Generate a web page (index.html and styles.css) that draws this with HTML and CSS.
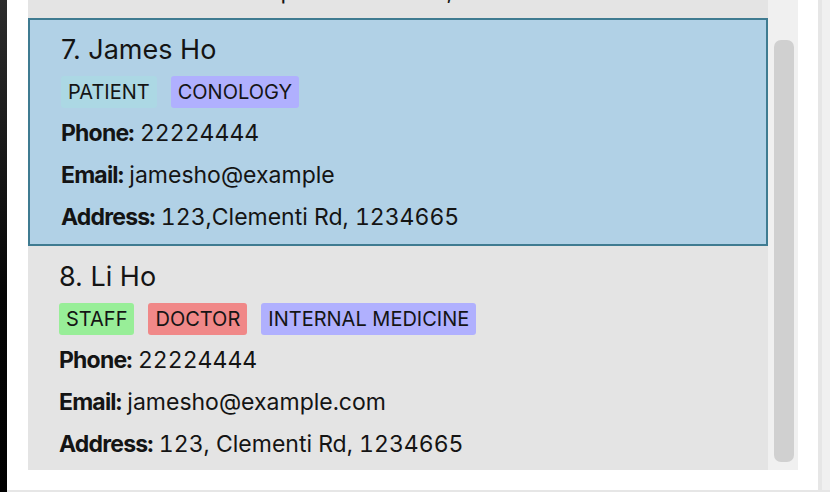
FILE: index.html
```html
<!DOCTYPE html>
<html lang="en">
<head>
<meta charset="utf-8">
<title>Person list</title>
<link rel="stylesheet" href="styles.css">
</head>
<body>
<div class="app">
  <div class="edge"></div>
  <div class="main">
    <div class="row">
      <div class="gutter"></div>
      <div class="listwrap">
        <div class="list">
          <div class="card card-partial">
            <div class="partial-inner">
              <div class="detail"><b>Address:</b> Blk 47 Tampines Street 20, #17-35</div>
            </div>
          </div>
          <div class="card selected">
            <div class="name">7. James Ho</div>
            <div class="tags">
              <span class="tag t-patient">PATIENT</span>
              <span class="tag t-dept">CONOLOGY</span>
            </div>
            <div class="detail"><b>Phone:</b> 22224444</div>
            <div class="detail"><b>Email:</b> jamesho@example</div>
            <div class="detail"><b>Address:</b> 123,Clementi Rd, 1234665</div>
          </div>
          <div class="card">
            <div class="name">8. Li Ho</div>
            <div class="tags">
              <span class="tag t-staff">STAFF</span>
              <span class="tag t-doctor">DOCTOR</span>
              <span class="tag t-dept">INTERNAL MEDICINE</span>
            </div>
            <div class="detail"><b>Phone:</b> 22224444</div>
            <div class="detail"><b>Email:</b> jamesho@example.com</div>
            <div class="detail"><b>Address:</b> 123, Clementi Rd, 1234665</div>
          </div>
        </div>
        <div class="scrolltrack"><div class="thumb"></div></div>
      </div>
      <div class="rightpad"></div>
      <div class="divider"></div>
      <div class="farright"></div>
    </div>
    <div class="bottomline"></div>
  </div>
</div>
</body>
</html>
```
FILE: styles.css
```css
* { box-sizing: border-box; }
html, body { margin: 0; padding: 0; }
body {
  width: 830px;
  height: 492px;
  overflow: hidden;
  background: #ffffff;
  font-family: "Inter", "Noto Sans", sans-serif;
  color: #141414;
}
.app { display: flex; height: 492px; }
.edge {
  width: 7px;
  flex: none;
  background: linear-gradient(to bottom, #2c2c2c, #050505 60%, #000);
}
.main { flex: 1; display: flex; flex-direction: column; }
.row { display: flex; height: 490px; }
.gutter { width: 21px; flex: none; }
.listwrap { display: flex; height: 470px; flex: none; }
.list {
  width: 740px;
  height: 470px;
  overflow: hidden;
  background: #e4e4e4;
  display: flex;
  flex-direction: column;
}
.scrolltrack {
  width: 30px;
  background: #f0f0f0;
  padding: 40px 4px 8px 6px;
  display: flex;
}
.thumb {
  flex: 1;
  background: #d0d0d0;
  border-radius: 7px;
}
.rightpad { width: 20px; flex: none; }
.divider { width: 4px; flex: none; background: #e6e6e6; }
.farright { flex: 1; background: #f0f0f0; }
.bottomline { height: 2px; background: #e6e6e6; }

.card {
  flex: none;
  padding: 15px 20px 6px 31px;
  background: #e4e4e4;
}
.card.selected {
  background: #b1d1e6;
  border: 2px solid #3f7b91;
  padding-top: 14px;
}
.card-partial {
  height: 18px;
  padding: 0 20px 0 31px;
  overflow: hidden;
  display: flex;
  flex-direction: column;
  justify-content: flex-end;
}
.partial-inner { padding-bottom: 6px; }
.name {
  font-size: 27px;
  line-height: 32px;
  letter-spacing: 0;
}
.tags {
  display: flex;
  gap: 14px;
  margin-top: 10px;
  margin-bottom: 4px;
}
.tag {
  font-size: 20px;
  line-height: 24px;
  padding: 4px 7px;
  border-radius: 3px;
  color: #151515;
}
.t-patient { background: #acd8e4; }
.t-dept { background: #b0b0fe; }
.t-staff { background: #98ee98; }
.t-doctor { background: #f08888; }
.detail {
  font-size: 23px;
  line-height: 42px;
  letter-spacing: 0;
  white-space: nowrap;
  font-variant-numeric: tabular-nums;
}
.detail b { font-weight: 700; letter-spacing: -0.8px; }
```
